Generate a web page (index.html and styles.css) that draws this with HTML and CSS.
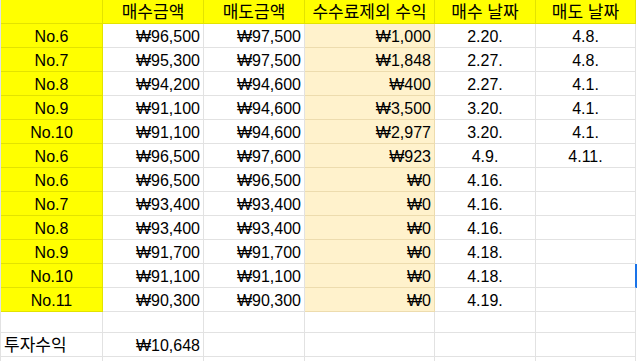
FILE: index.html
```html
<!DOCTYPE html>
<html lang="ko">
<head>
    <meta charset="UTF-8">
    <meta name="viewport" content="width=device-width, initial-scale=1.0">
    <title>투자 기록</title>
    <link rel="stylesheet" href="styles.css">
</head>
<body>
    <div class="sheet">
        <!-- header -->
        <div class="cell head"></div>
        <div class="cell head"><span class="ko">매수금액</span></div>
        <div class="cell head"><span class="ko">매도금액</span></div>
        <div class="cell head"><span class="ko">수수료제외 수익</span></div>
        <div class="cell head"><span class="ko">매수 날짜</span></div>
        <div class="cell head"><span class="ko">매도 날짜</span></div>

        <div class="cell name">No.6</div>
        <div class="cell num">₩96,500</div>
        <div class="cell num">₩97,500</div>
        <div class="cell num profit">₩1,000</div>
        <div class="cell date">2.20.</div>
        <div class="cell date">4.8.</div>

        <div class="cell name">No.7</div>
        <div class="cell num">₩95,300</div>
        <div class="cell num">₩97,500</div>
        <div class="cell num profit">₩1,848</div>
        <div class="cell date">2.27.</div>
        <div class="cell date">4.8.</div>

        <div class="cell name">No.8</div>
        <div class="cell num">₩94,200</div>
        <div class="cell num">₩94,600</div>
        <div class="cell num profit">₩400</div>
        <div class="cell date">2.27.</div>
        <div class="cell date">4.1.</div>

        <div class="cell name">No.9</div>
        <div class="cell num">₩91,100</div>
        <div class="cell num">₩94,600</div>
        <div class="cell num profit">₩3,500</div>
        <div class="cell date">3.20.</div>
        <div class="cell date">4.1.</div>

        <div class="cell name">No.10</div>
        <div class="cell num">₩91,100</div>
        <div class="cell num">₩94,600</div>
        <div class="cell num profit">₩2,977</div>
        <div class="cell date">3.20.</div>
        <div class="cell date">4.1.</div>

        <div class="cell name">No.6</div>
        <div class="cell num">₩96,500</div>
        <div class="cell num">₩97,600</div>
        <div class="cell num profit">₩923</div>
        <div class="cell date">4.9.</div>
        <div class="cell date">4.11.</div>

        <div class="cell name">No.6</div>
        <div class="cell num">₩96,500</div>
        <div class="cell num">₩96,500</div>
        <div class="cell num profit">₩0</div>
        <div class="cell date">4.16.</div>
        <div class="cell date"></div>

        <div class="cell name">No.7</div>
        <div class="cell num">₩93,400</div>
        <div class="cell num">₩93,400</div>
        <div class="cell num profit">₩0</div>
        <div class="cell date">4.16.</div>
        <div class="cell date"></div>

        <div class="cell name">No.8</div>
        <div class="cell num">₩93,400</div>
        <div class="cell num">₩93,400</div>
        <div class="cell num profit">₩0</div>
        <div class="cell date">4.16.</div>
        <div class="cell date"></div>

        <div class="cell name">No.9</div>
        <div class="cell num">₩91,700</div>
        <div class="cell num">₩91,700</div>
        <div class="cell num profit">₩0</div>
        <div class="cell date">4.18.</div>
        <div class="cell date"></div>

        <div class="cell name">No.10</div>
        <div class="cell num">₩91,100</div>
        <div class="cell num">₩91,100</div>
        <div class="cell num profit">₩0</div>
        <div class="cell date">4.18.</div>
        <div class="cell date selected-edge"></div>

        <div class="cell name">No.11</div>
        <div class="cell num">₩90,300</div>
        <div class="cell num">₩90,300</div>
        <div class="cell num profit">₩0</div>
        <div class="cell date">4.19.</div>
        <div class="cell date"></div>

        <!-- empty row -->
        <div class="cell short"></div>
        <div class="cell short"></div>
        <div class="cell short"></div>
        <div class="cell short"></div>
        <div class="cell short"></div>
        <div class="cell short"></div>

        <div class="cell"><span class="ko">투자수익</span></div>
        <div class="cell num">₩10,648</div>
        <div class="cell"></div>
        <div class="cell"></div>
        <div class="cell"></div>
        <div class="cell"></div>

        <div class="cell short"></div>
        <div class="cell short"></div>
        <div class="cell short"></div>
        <div class="cell short"></div>
        <div class="cell short"></div>
        <div class="cell short"></div>
    </div>
</body>
</html>
```

FILE: styles.css
```css
body {
    margin: 0;
    background-color: white;
    font-family: "Liberation Sans", Arial, "Noto Sans CJK KR", sans-serif;
    font-size: 16px;
    color: #000;
    overflow: hidden;
}

/* spreadsheet grid */
.sheet {
    display: grid;
    grid-template-columns: 102px 101px 101px 130px 101px 100px;
    width: max-content;
    border-left: 1px solid #e2e2e2;
}

.cell {
    box-sizing: border-box;
    height: 24px;
    padding: 0 3px 1px;
    line-height: 18px;
    border-right: 1px solid #e2e2e2;
    border-bottom: 1px solid #e2e2e2;
    display: flex;
    align-items: flex-end;
    white-space: nowrap;
    overflow: hidden;
}

.cell.short {
    height: 21px;
}

/* hangul is set a touch larger, as in the sheet */
.ko {
    font-size: 17px;
    line-height: 18px;
}

.head {
    background-color: #ffff00;
    border-color: #e3e300;
    justify-content: center;
}

.name {
    background-color: #ffff00;
    border-color: #e3e300;
    justify-content: center;
}

.num {
    justify-content: flex-end;
}

.profit {
    background-color: #fff2cc;
    border-color: #eddcae;
}

.date {
    justify-content: center;
}

/* edge of the selected cell next door */
.selected-edge {
    border-right-color: #1a73e8;
    box-shadow: 1px 0 0 #1a73e8;
}
```
